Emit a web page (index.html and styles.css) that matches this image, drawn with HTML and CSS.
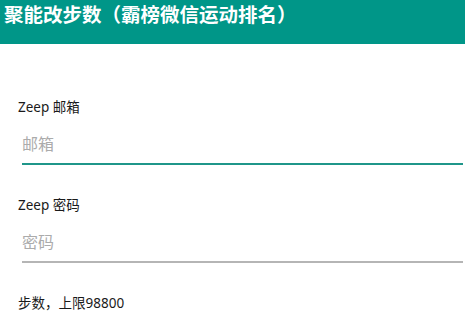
FILE: index.html
```html
<!DOCTYPE html>
<html lang="zh-CN">
<head>
    <meta charset="UTF-8">
    <title>聚能改步数</title>
    <link rel="stylesheet" href="styles.css">
</head>
<body>
    <div class="app-bar">聚能改步数（霸榜微信运动排名）</div>

    <div class="form">
        <div class="field">
            <label class="field-label" for="email">Zeep 邮箱</label>
            <input type="text" id="email" class="field-input active" placeholder="邮箱">
        </div>

        <div class="field">
            <label class="field-label" for="password">Zeep 密码</label>
            <input type="password" id="password" class="field-input" placeholder="密码">
        </div>

        <div class="field steps">
            <div class="field-label">步数，上限98800</div>
        </div>
    </div>
</body>
</html>
```

FILE: styles.css
```css
body {
    margin: 0;
    font-family: "Noto Sans", "Noto Sans CJK SC", sans-serif;
    background-color: #fff;
    color: #1a1a1a;
}

.app-bar {
    height: 44px;
    box-sizing: border-box;
    padding-left: 4px;
    background-color: #009688;
    color: #fff;
    font-size: 19.5px;
    font-weight: bold;
    line-height: 30px;
    white-space: nowrap;
    overflow: hidden;
}

.form {
    padding: 54px 2px 0 18px;
}

.field {
    display: flex;
    flex-direction: column;
    margin-bottom: 31px;
}

.field-label {
    font-size: 13.5px;
    line-height: 18px;
}

.field-input {
    margin: 8px 0 0 4px;
    padding: 0;
    height: 41px;
    box-sizing: border-box;
    border: none;
    border-bottom: 2px solid #b5b5b5;
    outline: none;
    font-family: inherit;
    font-size: 16px;
    color: #333;
    background: transparent;
}

.field-input::placeholder {
    color: #ababab;
}

.field-input.active {
    border-bottom-color: #1f968a;
}

.field.steps {
    margin-top: 6px;
}
```
